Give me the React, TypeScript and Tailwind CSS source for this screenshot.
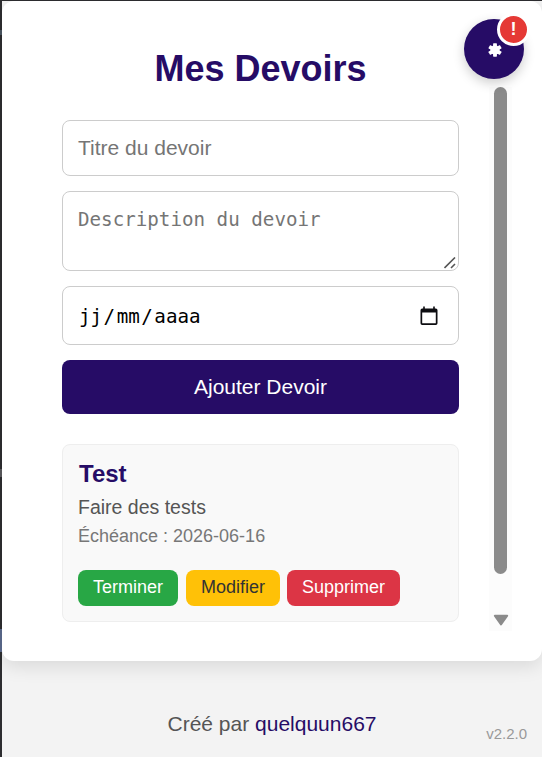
import React from "react";

function CalendarIcon() {
  return (
    <svg width="18" height="20" viewBox="0 0 18 20" className="shrink-0">
      <path d="M3.2 0.5h1.6v2h8.4v-2h1.6v2h1a1.7 1.7 0 0 1 1.7 1.7v13.1a1.7 1.7 0 0 1-1.7 1.7H2.2a1.7 1.7 0 0 1-1.7-1.7V4.2a1.7 1.7 0 0 1 1.7-1.7h1zM2.2 6.5v10.8h13.6V6.5z" fill="#0c0c10" fillRule="evenodd" />
    </svg>
  );
}

function GearIcon() {
  return (
    <svg width="14" height="14" viewBox="-7 -7 14 14" fill="white" className="mt-[2px] ml-px">
      {[0, 60, 120].map((angle) => (
        <rect key={angle} x="-1.9" y="-6.7" width="3.8" height="13.4" rx="0.6" transform={`rotate(${angle})`} />
      ))}
      <circle r="4.7" />
    </svg>
  );
}

function Scrollbar() {
  return (
    <div className="flex h-[544px] w-[23px] flex-col items-center bg-[#fcfcfc]">
      <div className="h-[487px] w-[13px] shrink-0 rounded-full bg-[#8b8b8b]" />
      <svg width="16" height="12" viewBox="0 0 16 12" className="mt-10 shrink-0">
        <path d="M1.8 1.7h12.4L8 10.5z" fill="#8b8b8b" stroke="#8b8b8b" strokeWidth="2" strokeLinejoin="round" />
      </svg>
    </div>
  );
}

function TaskCard() {
  return (
    <article className="mt-[30px] h-[178px] rounded-lg border border-[#eeeeee] bg-[#f9f9f9] px-[15px] pt-[15px]">
      <h2 className="h-7 pl-px text-[24px] leading-7 font-bold text-[#260c66]">Test</h2>
      <p className="mt-1 h-[30px] text-[19.5px] leading-[30px] text-[#555555]">Faire des tests</p>
      <p className="h-7 text-[18px] leading-7 text-[#777777]">Échéance : 2026-06-16</p>
      <div className="mt-5 flex text-[18px] leading-[34px]">
        <button className="h-9 w-[100px] rounded-lg bg-[#28a745] pb-[2px] text-white">Terminer</button>
        <button className="ml-2 h-9 w-[94px] rounded-lg bg-[#ffc107] pb-[2px] text-[#333333]">Modifier</button>
        <button className="ml-[7px] h-9 w-[113px] rounded-lg bg-[#dc3545] pb-[2px] text-white">Supprimer</button>
      </div>
    </article>
  );
}

export default function App() {
  return (
    <div className="relative h-[757px] w-[542px] overflow-hidden bg-[#2d2d30] pt-px pl-[2px] font-['Liberation_Sans',Arial,sans-serif]">
      <div className="absolute top-[629px] left-0 h-[23px] w-[2px] bg-[#566485]" />
      <div className="absolute top-[469px] left-0 h-2 w-[2px] bg-[#555558]" />
      <div className="absolute top-[30px] left-0 h-[5px] w-[2px] bg-[#46505b]" />
      <div className="flex h-[756px] flex-col bg-[#f3f3f3]">
        <main className="flex h-[660px] shrink-0 rounded-xl bg-white pl-[60px] shadow-[0_6px_18px_rgba(0,0,0,0.1)]">
          <div className="w-[397px]">
            <h1 className="mt-[47px] h-[42px] text-center text-[36px] leading-[42px] font-bold text-[#260c66]">Mes Devoirs</h1>
            <div className="mt-[30px] flex h-14 items-center rounded-lg border border-[#cccccc] px-[15px] pb-px text-[21px] text-[#757575]">Titre du devoir</div>
            <div className="relative mt-[15px] h-20 rounded-lg border border-[#cccccc] px-[15px] pt-[15px] font-['DejaVu_Sans_Mono',monospace] text-[19.2px] leading-[25px] text-[#757575]">
              Description du devoir
              <svg width="12" height="12" viewBox="0 0 12 12" className="absolute right-[2px] bottom-px">
                <path d="M0.5 11L11 0.5M7 11L11 7" stroke="#555" strokeWidth="1.6" fill="none" />
              </svg>
            </div>
            <div className="mt-[15px] flex h-[59px] items-center justify-between rounded-lg border border-[#cccccc] pr-5 pl-4 font-['DejaVu_Sans_Mono',monospace] text-[19.2px] text-black">
              <span className="flex pt-[3px]"><span>jj</span><span className="mx-[1.5px]">/</span><span>mm</span><span className="mx-[1.5px]">/</span><span>aaaa</span></span>
              <CalendarIcon />
            </div>
            <button className="mt-[15px] block h-[54px] w-full rounded-lg bg-[#260c66] text-[21px] text-white">Ajouter Devoir</button>
            <TaskCard />
          </div>
          <div className="mt-[86px] ml-[30px]"><Scrollbar /></div>
        </main>
        <footer className="mt-[47px] grid h-8 grid-cols-1 text-center text-[21px] leading-8 text-[#555555]">
          <p>Créé par <span className="text-[#260c66]">quelquun667</span></p>
        </footer>
        <span className="mr-[15px] -mt-[14px] self-end text-[15px] leading-4 text-[#999999]">v2.2.0</span>
      </div>
      <button className="absolute top-[19px] left-[464px] flex h-[60px] w-[60px] items-center justify-center rounded-full bg-[#260c66] shadow-[0_4px_12px_rgba(0,0,0,0.2)]">
        <GearIcon />
        <span className="absolute -top-[6px] -right-[6px] flex h-[33px] w-[33px] items-center justify-center rounded-full border-[3px] border-white bg-[#e53935] pb-px text-[18px] font-bold text-white">!</span>
      </button>
    </div>
  );
}
